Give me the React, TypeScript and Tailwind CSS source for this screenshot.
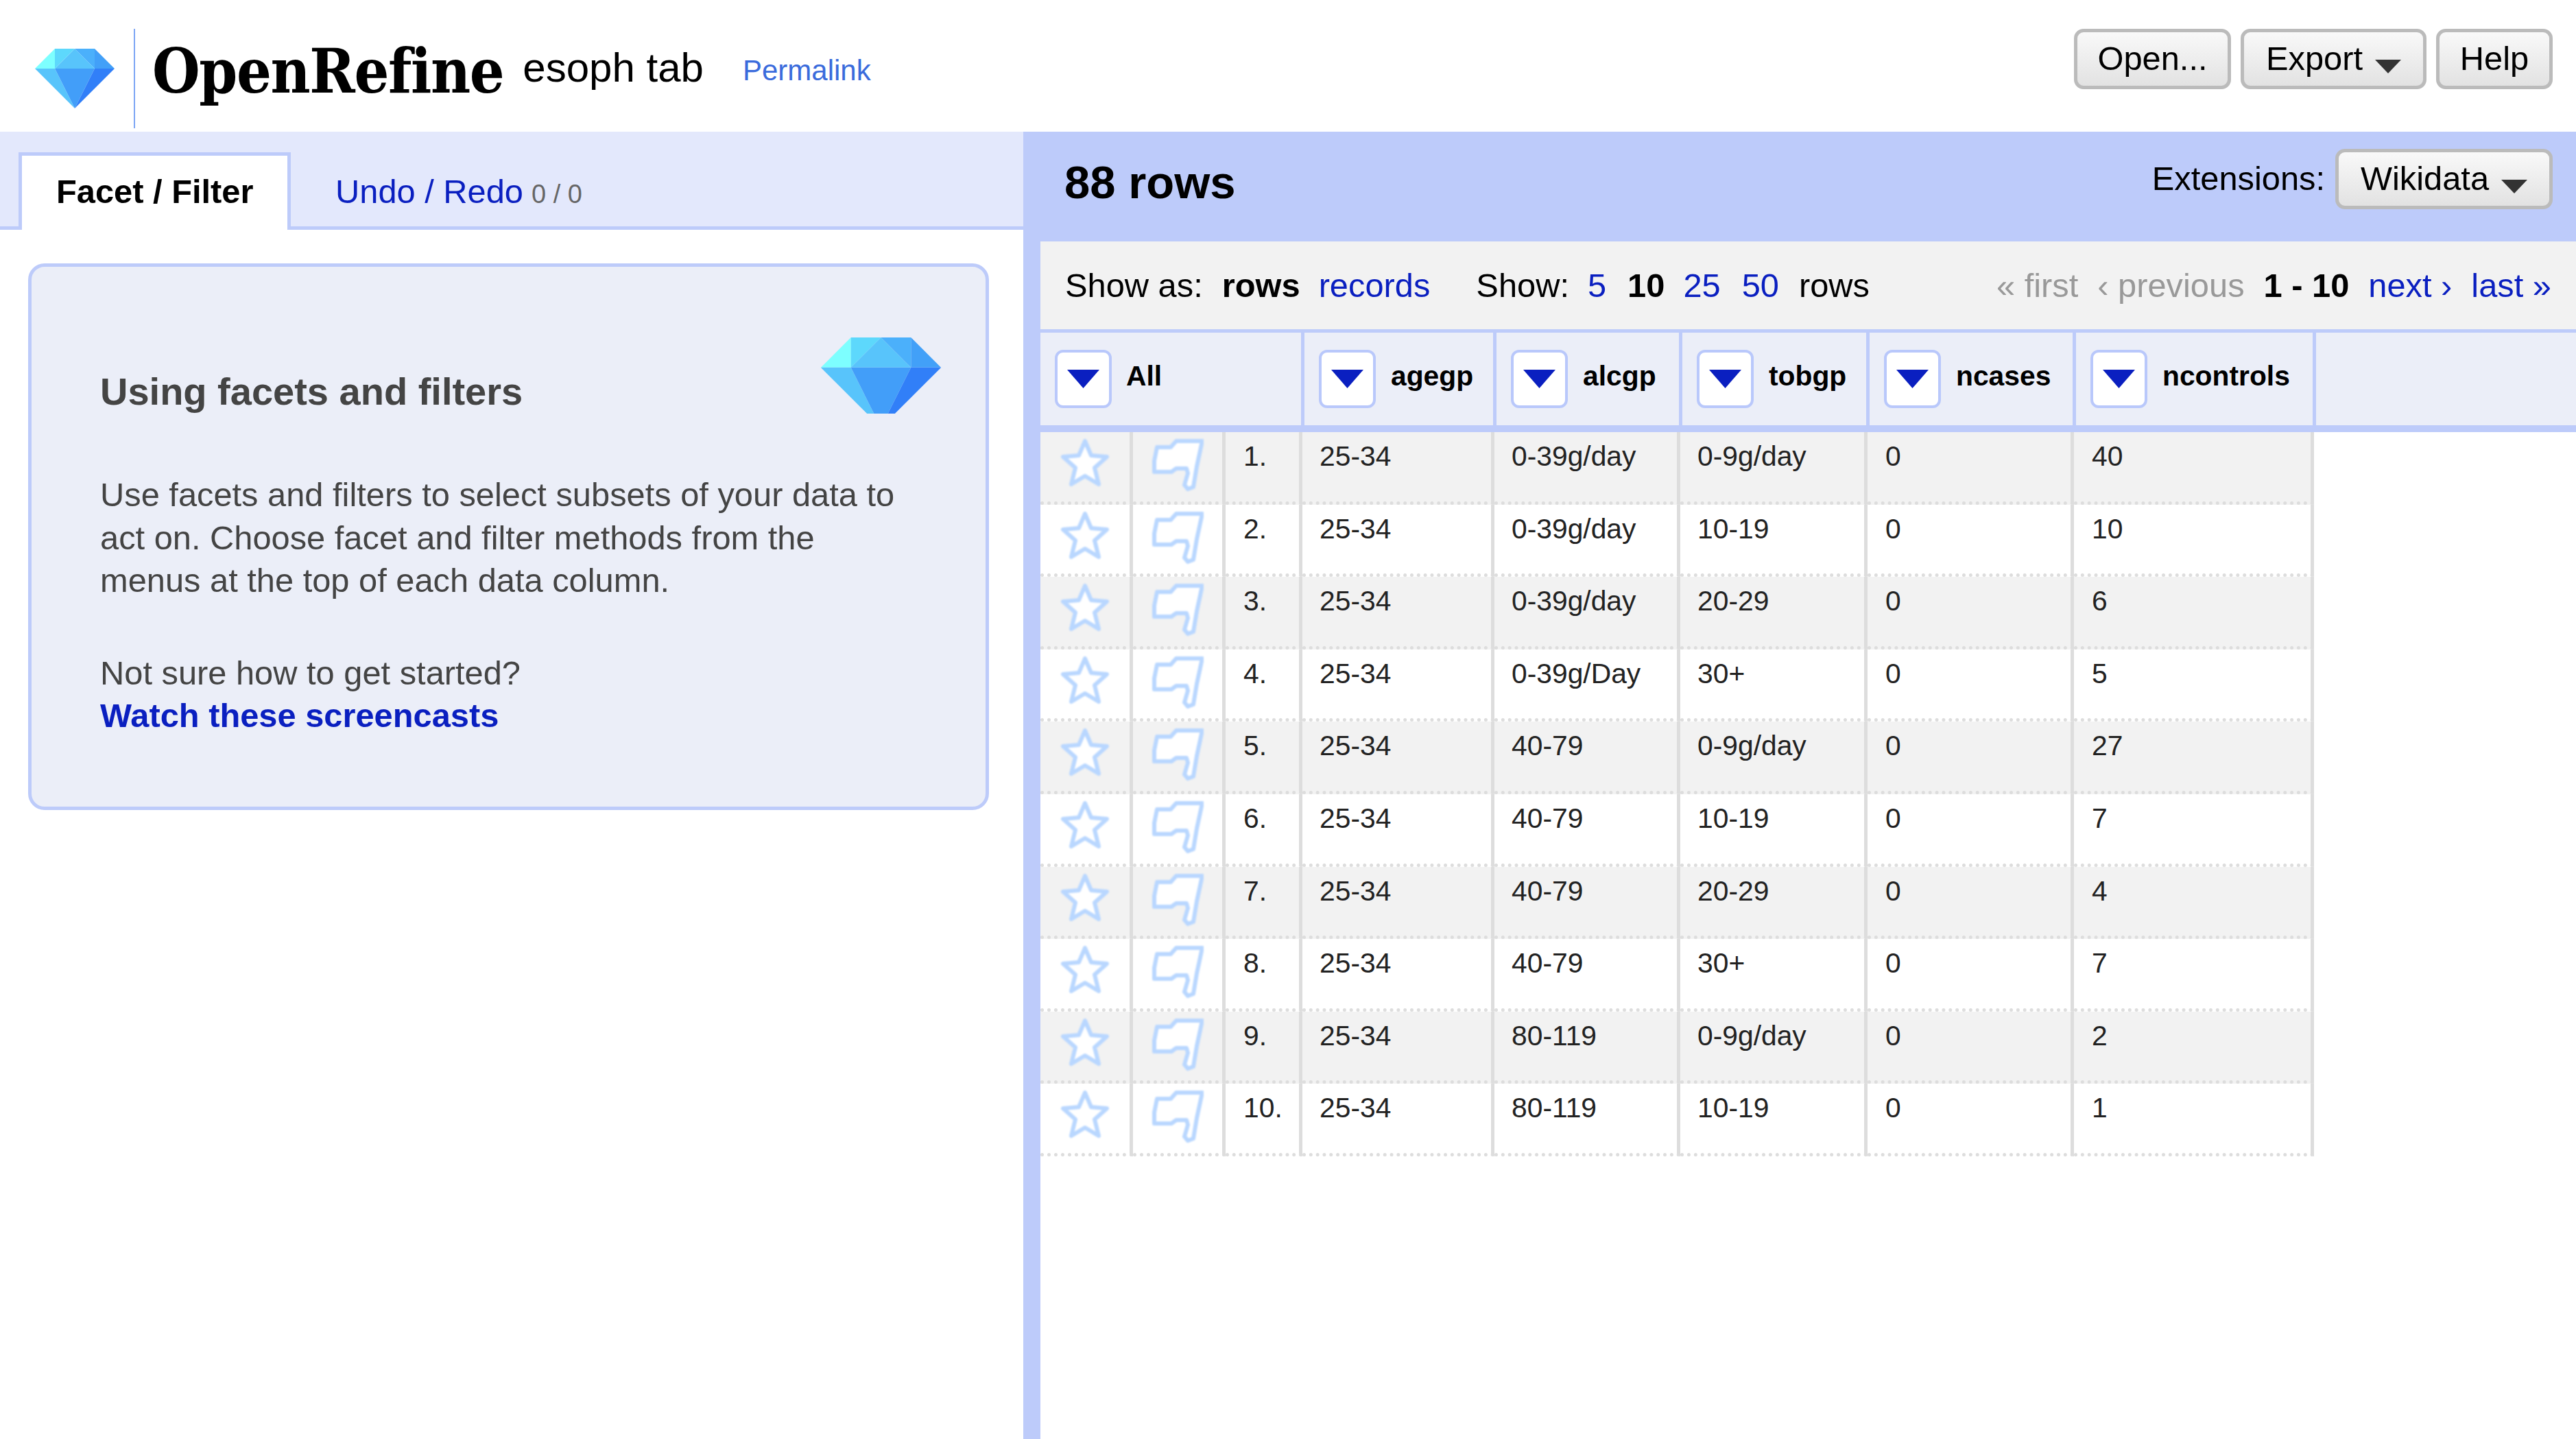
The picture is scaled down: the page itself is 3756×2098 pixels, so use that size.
import React from "react";

const Gem = ({ className }: { className?: string }) => (
  <svg viewBox="0 0 116 87" className={className}>
    <polygon points="0,29 29,0 29,29" fill="#7dffff" />
    <polygon points="29,0 58,0 29,29" fill="#5dd8fc" />
    <polygon points="29,29 58,0 87,29" fill="#58c4fb" />
    <polygon points="58,0 87,0 87,29" fill="#4bb0fb" />
    <polygon points="87,0 116,29 87,29" fill="#42a0f8" />
    <polygon points="0,29 29,29 58,87" fill="#58c4fb" />
    <polygon points="29,29 87,29 58,87" fill="#429ef9" />
    <polygon points="87,29 116,29 58,87" fill="#317ff8" />
  </svg>
);

const DarkArrow = () => (
  <svg viewBox="0 0 38 20" className="w-[38px] h-[20px] mt-[22px] blur-[0.6px]">
    <polygon points="0,0 38,0 19,20" fill="#333333" />
  </svg>
);

const Btn = ({ children, w }: { children: React.ReactNode; w: string }) => (
  <div className={`${w} h-[88px] flex items-center justify-center gap-[18px] rounded-[14px] border-[5px] border-[#bbbbbb] bg-gradient-to-b from-[#f9f9f9] to-[#e2e2e2] text-[48.8px] text-black`}>
    {children}
  </div>
);

const ColBtn = () => (
  <div className="w-[83px] h-[85px] shrink-0 flex items-center justify-center rounded-[12px] border-[4px] border-[#b9c8fb] bg-white">
    <svg viewBox="0 0 47 27" className="w-[47px] h-[27px]">
      <polygon points="0,0 47,0 23.5,27" fill="#0a1fc0" />
    </svg>
  </div>
);

const Star = () => (
  <svg viewBox="0 0 70 70" className="w-[70px] h-[70px] blur-[0.8px]">
    <polygon
      points="35,3 44,24 67,26 49,42 55,66 35,54 15,66 21,42 3,26 26,24"
      fill="#ffffff"
      stroke="#b9d7ff"
      strokeWidth="6"
      strokeLinejoin="round"
    />
  </svg>
);

const Flag = () => (
  <svg viewBox="0 0 75 76" className="w-[75px] h-[76px] blur-[0.8px]">
    <polygon
      points="73,3 35,3 27,12 7,12 3,32 3,48 28,48 35,43 50,43 52,50 47,67 52,73 60,70 65,40"
      fill="#ffffff"
      stroke="#b9d7ff"
      strokeWidth="6"
      strokeLinejoin="round"
    />
  </svg>
);

const rows = [
  ["1.", "25-34", "0-39g/day", "0-9g/day", "0", "40"],
  ["2.", "25-34", "0-39g/day", "10-19", "0", "10"],
  ["3.", "25-34", "0-39g/day", "20-29", "0", "6"],
  ["4.", "25-34", "0-39g/Day", "30+", "0", "5"],
  ["5.", "25-34", "40-79", "0-9g/day", "0", "27"],
  ["6.", "25-34", "40-79", "10-19", "0", "7"],
  ["7.", "25-34", "40-79", "20-29", "0", "4"],
  ["8.", "25-34", "40-79", "30+", "0", "7"],
  ["9.", "25-34", "80-119", "0-9g/day", "0", "2"],
  ["10.", "25-34", "80-119", "10-19", "0", "1"],
];

const bodyCols = [
  "w-[112px] pl-[26px]",
  "w-[280px] pl-[25px]",
  "w-[271px] pl-[25px]",
  "w-[273px] pl-[25px]",
  "w-[301px] pl-[26px]",
  "w-[350px] pl-[26px]",
];
const cols = [
  { name: "agegp", w: "w-[280px]" },
  { name: "alcgp", w: "w-[271px]" },
  { name: "tobgp", w: "w-[273px]" },
  { name: "ncases", w: "w-[301px]" },
  { name: "ncontrols", w: "w-[350px]" },
];

const cellBase =
  "h-full shrink-0 border-r-[5px] border-r-[#dddddd] border-b-[5px] border-b-[#dddddd] [border-bottom-style:dotted]";

export default function App() {
  return (
    <div className="w-[3756px] h-[2098px] overflow-hidden bg-white flex flex-col font-['Liberation_Sans',Arial,sans-serif] text-black whitespace-nowrap">
      {/* Top bar */}
      <header className="h-[192px] shrink-0 flex items-start bg-white">
        <Gem className="w-[116px] h-[87px] ml-[51px] mt-[71px] shrink-0" />
        <div className="w-[2px] h-[145px] ml-[28px] mt-[42px] shrink-0 bg-[#7ea6f5]" />
        <div className="ml-[25px] mt-[48px] leading-[112px] text-[89px] font-bold font-['DejaVu_Serif','Liberation_Serif',serif] [font-stretch:condensed] tracking-[-1.4px]">
          OpenRefine
        </div>
        <div className="ml-[28px] mt-[64px] text-[60px] leading-[70px]">esoph tab</div>
        <div className="ml-[57px] mt-[78px] text-[42px] leading-[50px] text-[#3a6bdc]">Permalink</div>
        <div className="ml-auto mt-[42px] mr-[34px] flex gap-[14px]">
          <Btn w="w-[229px]">Open...</Btn>
          <Btn w="w-[271px]">
            <span>Export</span>
            <DarkArrow />
          </Btn>
          <Btn w="w-[170px]">Help</Btn>
        </div>
      </header>

      <div className="flex-1 flex min-h-0">
        {/* Left panel */}
        <aside className="w-[1492px] shrink-0 flex flex-col bg-white">
          <div className="h-[143px] shrink-0 flex items-end bg-[#e3e8fc] border-b-[5px] border-[#bdcbfa] text-[48.8px] leading-[56px]">
            <div className="ml-[27px] h-[113px] -mb-[5px] w-[397px] pl-[50px] pt-[24px] border-[5px] border-b-0 border-[#bdcbfa] bg-white font-bold">
              Facet / Filter
            </div>
            <div className="ml-[65px] h-[108px] pt-[29px]">
              <span className="text-[#0a1fc0]">Undo / Redo</span>
              <span className="ml-[12px] text-[38px] text-[#666666]">0 / 0</span>
            </div>
          </div>
          <div className="ml-[41px] mt-[49px] w-[1401px] h-[797px] rounded-[24px] border-[5px] border-[#bdcbfa] bg-[#ebeef8] pl-[100px] text-[#444444]">
            <div className="flex justify-between pr-[65px] pt-[103px]">
              <h2 className="mt-[46px] text-[56px] leading-[66px] font-bold">Using facets and filters</h2>
              <svg viewBox="0 0 116 73.5" preserveAspectRatio="xMidYMin slice" className="w-[175px] h-[111px] shrink-0">
                <polygon points="0,29 29,0 29,29" fill="#7dffff" />
                <polygon points="29,0 58,0 29,29" fill="#5dd8fc" />
                <polygon points="29,29 58,0 87,29" fill="#58c4fb" />
                <polygon points="58,0 87,0 87,29" fill="#4bb0fb" />
                <polygon points="87,0 116,29 87,29" fill="#42a0f8" />
                <polygon points="0,29 29,29 58,87" fill="#58c4fb" />
                <polygon points="29,29 87,29 58,87" fill="#429ef9" />
                <polygon points="87,29 116,29 58,87" fill="#317ff8" />
              </svg>
            </div>
            <p className="mt-[86px] text-[48.8px] leading-[62.5px]">
              Use facets and filters to select subsets of your data to
              <br />
              act on. Choose facet and filter methods from the
              <br />
              menus at the top of each data column.
            </p>
            <p className="mt-[72px] text-[48.8px] leading-[62.5px]">
              Not sure how to get started?
              <br />
              <span className="font-bold text-[#0a1fc0]">Watch these screencasts</span>
            </p>
          </div>
        </aside>

        {/* Right panel */}
        <main className="flex-1 min-w-0 flex flex-col bg-white border-l-[25px] border-[#bdcbfa]">
          <div className="-ml-[25px] h-[160px] shrink-0 flex items-start bg-[#bdcbfa]">
            <div className="ml-[60px] mt-[34px] text-[67px] leading-[80px] font-bold">88 rows</div>
            <div className="ml-auto mt-[40px] text-[48.8px] leading-[56px]">Extensions:</div>
            <div className="ml-[15px] mr-[34px] mt-[25px]">
              <Btn w="w-[317px]">
                <span>Wikidata</span>
                <DarkArrow />
              </Btn>
            </div>
          </div>

          <div className="h-[133px] shrink-0 flex items-start justify-between bg-[#f2f2f2] border-b-[5px] border-[#bdcbfa] text-[48.8px] leading-[56px] pl-[36px] pr-[36px] pt-[36px]">
            <div className="flex">
              <span>Show as:</span>
              <span className="ml-[28px] font-bold">rows</span>
              <span className="ml-[27px] text-[#0a1fc0]">records</span>
              <span className="ml-[67px]">Show:</span>
              <span className="ml-[27px] text-[#0a1fc0]">5</span>
              <span className="ml-[31px] font-bold">10</span>
              <span className="ml-[27px] text-[#0a1fc0]">25</span>
              <span className="ml-[31px] text-[#0a1fc0]">50</span>
              <span className="ml-[29px]">rows</span>
            </div>
            <div className="flex gap-[28px]">
              <span className="text-[#999999]">« first</span>
              <span className="text-[#999999]">‹ previous</span>
              <span className="font-bold">1 - 10</span>
              <span className="text-[#0a1fc0]">next ›</span>
              <span className="text-[#0a1fc0]">last »</span>
            </div>
          </div>

          {/* Column headers */}
          <div className="h-[145px] shrink-0 flex bg-[#ebeef8] border-b-[10px] border-[#bdcbfa] text-[40.8px] font-bold">
            <div className="w-[385px] h-full shrink-0 flex items-start gap-[21px] pl-[21px] pt-[25px] border-r-[5px] border-[#bdcbfa]">
              <ColBtn />
              <span className="leading-[50px] mt-[13px]">All</span>
            </div>
            {cols.map((c) => (
              <div key={c.name} className={`${c.w} h-full shrink-0 flex items-start gap-[22px] pl-[21px] pt-[25px] border-r-[5px] border-[#bdcbfa]`}>
                <ColBtn />
                <span className="leading-[50px] mt-[13px]">{c.name}</span>
              </div>
            ))}
          </div>

          {/* Rows */}
          <div className="flex flex-col text-[40.8px] leading-[48px] text-[#222222]">
            {rows.map((r, i) => (
              <div key={i} className={`h-[105.6px] w-[1857px] flex ${i % 2 === 0 ? "bg-[#f2f2f2]" : "bg-white"}`}>
                <div className={`${cellBase} w-[135px] flex justify-center pt-[10px]`}>
                  <Star />
                </div>
                <div className={`${cellBase} w-[135px] flex justify-center pt-[10px] pl-[1px]`}>
                  <Flag />
                </div>
                {r.map((v, j) => (
                  <div key={j} className={`${cellBase} ${bodyCols[j]} pt-[11px]`}>
                    {v}
                  </div>
                ))}
              </div>
            ))}
          </div>
        </main>
      </div>
    </div>
  );
}
